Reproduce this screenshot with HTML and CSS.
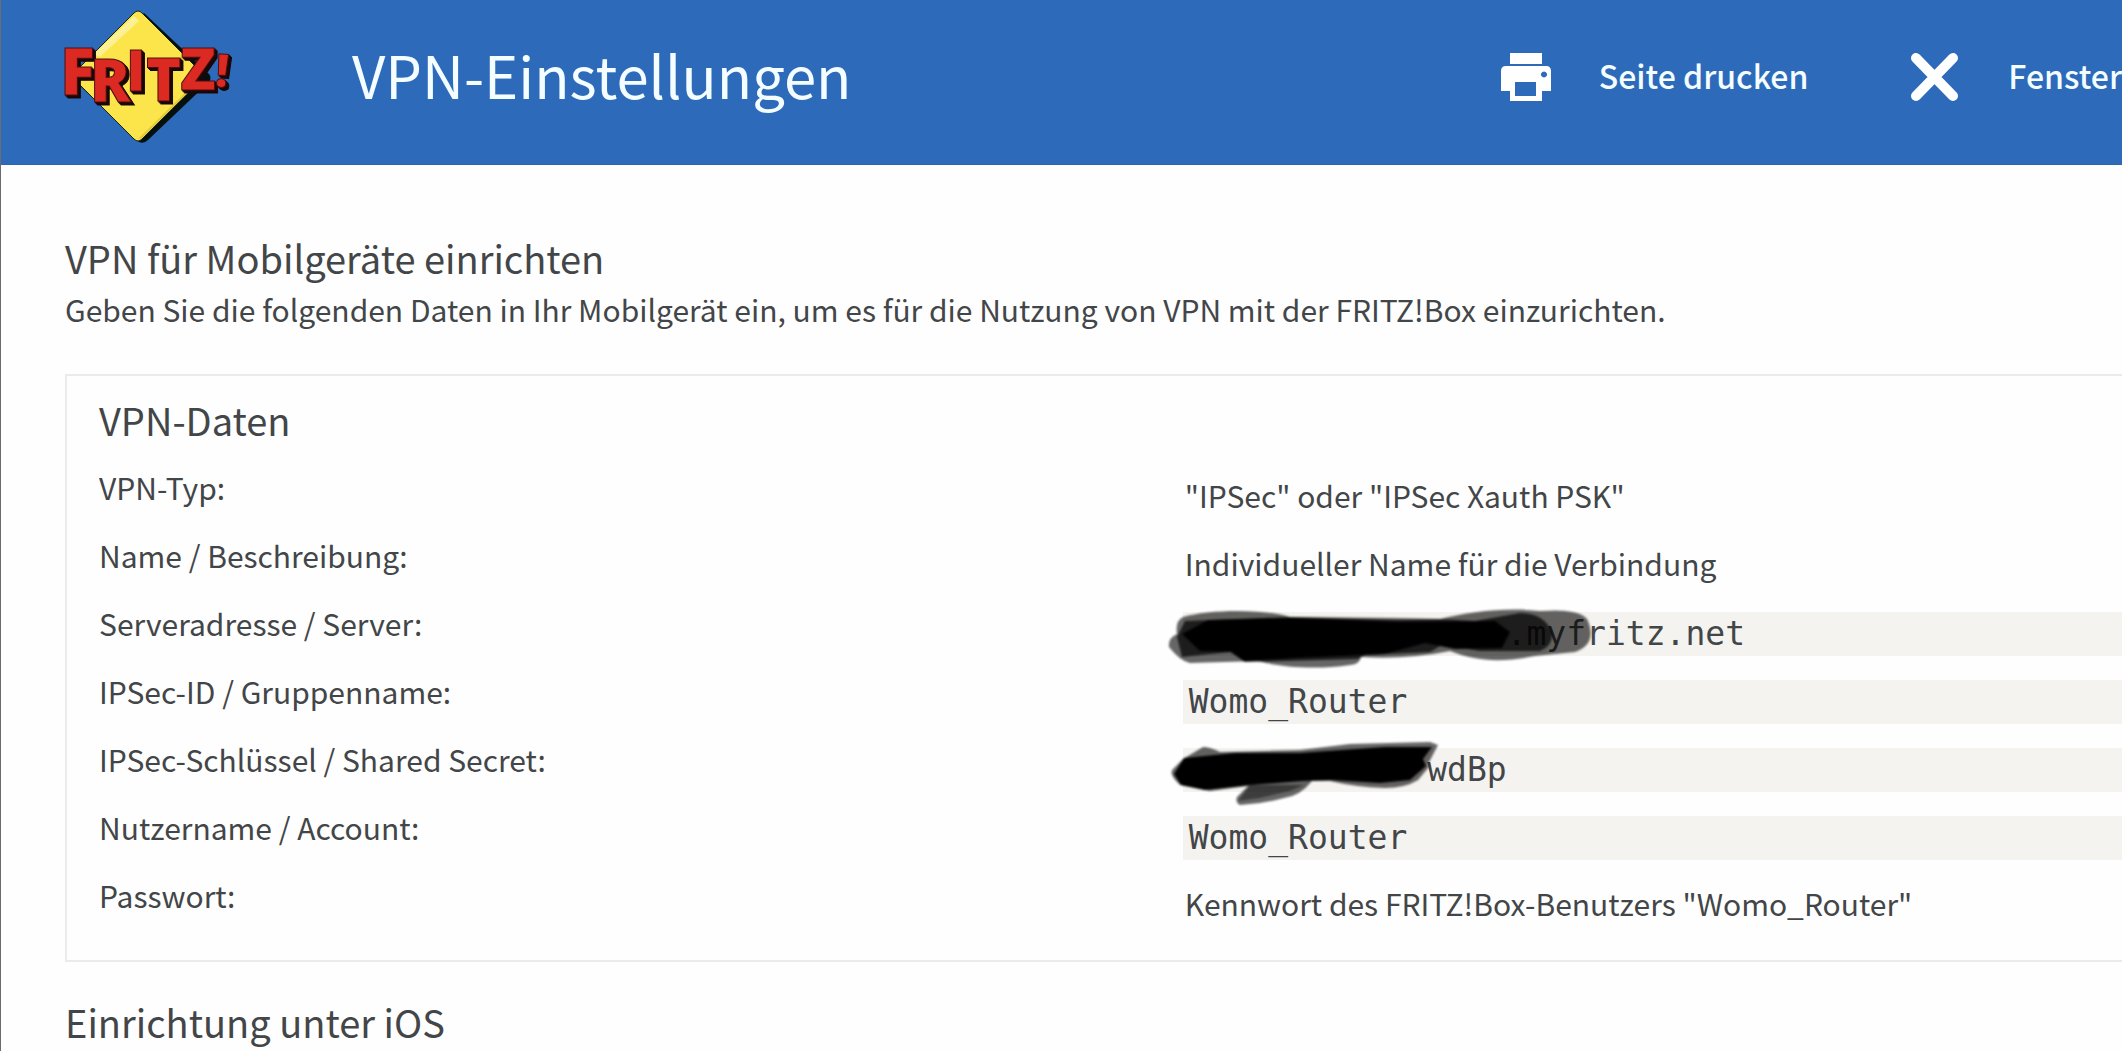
FILE: index.html
```html
<!DOCTYPE html>
<html lang="de">
<head>
    <meta charset="UTF-8">
    <meta name="viewport" content="width=device-width, initial-scale=1.0">
    <title>VPN-Einstellungen</title>
    <link rel="stylesheet" href="styles.css">
</head>
<body>
    <header class="header">
        <svg class="logo" viewBox="60 5 180 140" role="img" aria-label="FRITZ!">
            <defs>
                <linearGradient id="shine" x1="0" y1="0" x2="1" y2="1">
                    <stop offset="0" stop-color="#fffce0"/>
                    <stop offset="1" stop-color="#fbe54a"/>
                </linearGradient>
            </defs>
            <path d="M144 13 L209 74 Q212 78 209 82 L148 140 Q144 144 139 142 L76 82 Z" fill="#04100f"/>
            <path d="M134 13 Q138 9 142 13 L201 72 Q205 76 201 80 L142 139 Q138 143 134 139 L75 80 Q71 76 75 72 Z" fill="#fbe54a" stroke="#12251c" stroke-width="1"/>
            <path d="M134 16 L139 21 L100 57 L94 54 Z" fill="url(#shine)"/>
            <path d="M138 139 L194 84 L199 82 L142 138 Z" fill="#e3c93a"/>
            <g class="logo-text">
                <text x="60" y="95" font-size="65">F</text>
                <text x="90" y="102" font-size="60">R</text>
                <text x="126" y="91" font-size="57">I</text>
                <text x="146" y="101" font-size="60">T</text>
                <text x="180" y="90" font-size="59">Z</text>
                <text x="216" y="87" font-size="46" transform="rotate(5 224 68)">!</text>
            </g>
        </svg>
        <h1 class="title">VPN-Einstellungen</h1>
        <div class="actions">
            <button class="action" type="button">
                <svg class="icon" viewBox="0 0 50 48" aria-hidden="true">
                    <path fill="#fff" fill-rule="evenodd" d="M9 0h32v11H9z M5 13h40q5 0 5 5v20h-9v10H9V38H0V18q0-5 5-5z M14 29v14h21V29z M43 18.500a3 3 0 1 0 .01 0z"/>
                </svg>
                <span>Seite drucken</span>
            </button>
            <button class="action" type="button">
                <svg class="icon" viewBox="0 0 50 48" aria-hidden="true">
                    <path d="M6 5 L43 43 M43 5 L6 43" stroke="#fff" stroke-width="10" stroke-linecap="round"/>
                </svg>
                <span>Fenster</span>
            </button>
        </div>
    </header>

    <main class="content">
        <h2 class="heading">VPN für Mobilgeräte einrichten</h2>
        <p class="intro">Geben Sie die folgenden Daten in Ihr Mobilgerät ein, um es für die Nutzung von VPN mit der FRITZ!Box einzurichten.</p>

        <section class="box">
            <h2 class="heading">VPN-Daten</h2>
            <dl class="data">
                <dt>VPN-Typ:</dt>
                <dd>"IPSec" oder "IPSec Xauth PSK"</dd>
                <dt>Name / Beschreibung:</dt>
                <dd>Individueller Name für die Verbindung</dd>
                <dt>Serveradresse / Server:</dt>
                <dd class="code">
                    <span class="hidden-server"></span>.myfritz.net
                    <svg class="marker" viewBox="1163 605 440 85" aria-hidden="true">
                        <path fill-opacity=".6" d="M1183 616 C1210 608 1265 608 1290 616 L1395 617 L1440 618 C1470 611 1505 606 1540 610 C1565 608 1585 611 1588 620 C1594 635 1590 646 1575 651 L1535 655 C1500 662 1475 660 1450 650 C1420 656 1390 658 1361 656 Q1360 663 1350 664 C1315 669 1280 666 1258 660 L1190 662 Q1180 660 1169 646 Q1168 637 1177 633 Q1175 620 1183 616 Z"/>
                        <path fill-opacity=".7" d="M1185 620 L1290 616 L1395 619 L1440 618 L1475 620 L1520 612 Q1545 612 1552 632 Q1553 645 1540 650 L1480 650 L1442 644 L1430 651 L1365 654 L1358 658 L1245 661 L1230 651 L1182 656 L1177 636 Z"/>
                        <path d="M1208 619 L1290 617 L1400 621 L1495 620 L1510 631 L1502 647 L1455 648 L1425 642 L1385 653 L1295 657 L1244 660 L1232 651 L1200 650 L1182 633 Z"/>
                    </svg>
                </dd>
                <dt>IPSec-ID / Gruppenname:</dt>
                <dd class="code">Womo_Router</dd>
                <dt>IPSec-Schlüssel / Shared Secret:</dt>
                <dd class="code">
                    <span class="hidden-key"></span>wdBp
                    <svg class="marker" viewBox="1163 741 440 85" aria-hidden="true">
                        <path fill-opacity=".6" d="M1183 758 L1203 746 Q1210 746 1220 751 L1300 749 L1350 743 L1430 741 L1438 744 L1428 763 L1429 766 L1418 779 Q1405 787 1385 787 Q1355 786 1330 780 L1312 780 Q1300 795 1284 797 Q1262 803 1240 804 Q1235 801 1237 796 L1248 785 L1210 790 L1180 784 Q1168 773 1173 768 Z"/>
                        <path fill-opacity=".4" d="M1238 800 L1250 784 L1304 784 L1290 790 L1260 797 Z"/>
                        <path d="M1184 757 L1235 752 L1300 752 L1385 746 L1432 746 L1423 758 L1426 765 L1410 779 L1380 782 L1330 779 L1302 780 L1250 784 L1205 789 L1181 784 L1174 773 Z"/>
                    </svg>
                </dd>
                <dt>Nutzername / Account:</dt>
                <dd class="code">Womo_Router</dd>
                <dt>Passwort:</dt>
                <dd>Kennwort des FRITZ!Box-Benutzers "Womo_Router"</dd>
            </dl>
        </section>

        <h2 class="heading">Einrichtung unter iOS</h2>
    </main>
</body>
</html>
```
FILE: styles.css
```css
* {
    box-sizing: border-box;
}
body, h1, h2, p, dl, dd {
    margin: 0;
}
body {
    min-height: 100vh;
    border-left: 1px solid #6c6c70;
    background-color: #fefefe;
    color: #434648;
    font-family: "Noto Sans CJK SC", "Noto Sans", sans-serif;
    font-size: 30px;
    overflow: hidden;
}
.header {
    display: flex;
    align-items: flex-start;
    height: 165px;
    padding: 5px 0 0 59px;
    background-color: #2d6bba;
    border-bottom: 1px solid #2f66a6;
    color: #f4fdff;
}
.logo {
    flex: none;
    width: 180px;
    height: 140px;
}
.logo-text {
    fill: #dc2a22;
    stroke: #4a1010;
    stroke-width: 1px;
    font-family: "Open Sans", sans-serif;
    font-weight: 800;
    filter: drop-shadow(2px 2px 0 #1a0708) drop-shadow(1px 1px 0 #1a0708);
}
.title {
    margin-left: 112px;
    font-size: 58px;
    font-weight: 400;
    line-height: 138px;
}
.actions {
    display: flex;
    gap: 102px;
    margin-left: auto;
}
.action {
    display: flex;
    align-items: center;
    gap: 48px;
    height: 144px;
    padding: 0;
    border: 0;
    background: none;
    color: inherit;
    font-family: inherit;
    font-size: 32px;
    font-weight: 500;
    white-space: nowrap;
}
.action span {
    padding-bottom: 4px;
}
.icon {
    width: 50px;
    height: 48px;
}
.content {
    padding: 67px 0 0 64px;
}
.heading {
    font-size: 38px;
    font-weight: 400;
    line-height: 52px;
}
.intro {
    line-height: 50px;
}
.box {
    margin: 40px 0 34px;
    padding: 18px 0 18px 32px;
    border: 2px solid #ebebeb;
    border-right: 0;
}
.data {
    display: grid;
    grid-template-columns: 15fr 13fr;
    grid-auto-rows: 68px;
    margin-top: 20px;
}
.data dt {
    line-height: 42px;
}
.data dd {
    position: relative;
    height: 44px;
    margin-top: 10px;
    padding-left: 2px;
    line-height: 38px;
    white-space: nowrap;
}
.data .code {
    padding-left: 6px;
    background-color: #f4f3f0;
    font-family: "DejaVu Sans Mono", monospace;
    font-size: 33px;
    line-height: 44px;
}
/* struck-out characters, only their width is kept */
.hidden-server {
    display: inline-block;
    width: 16ch;
}
.hidden-key {
    display: inline-block;
    width: 12ch;
}
.marker {
    position: absolute;
    top: -6px;
    left: -20px;
    width: 440px;
    height: 85px;
    filter: blur(1px);
}
```
